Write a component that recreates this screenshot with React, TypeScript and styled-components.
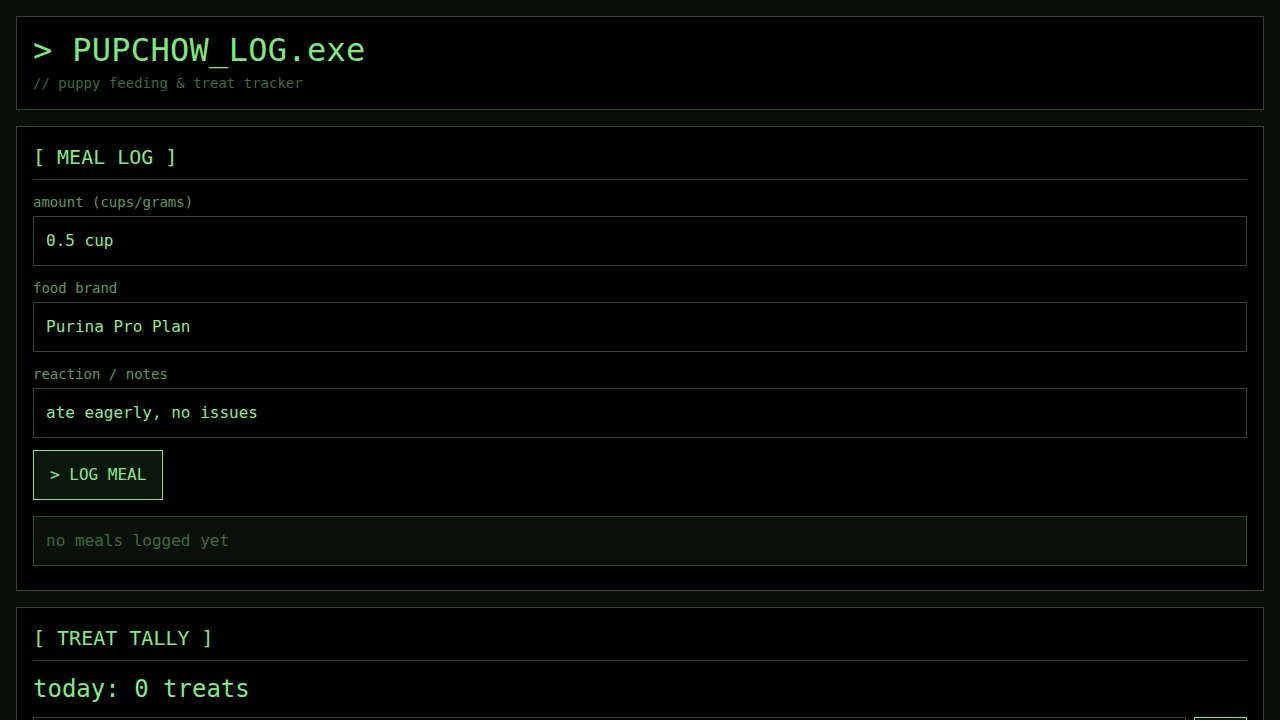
import React from "react";
import styled, { createGlobalStyle } from "styled-components";

const Global = createGlobalStyle`
  html, body { margin: 0; padding: 0; background: #0a0f0a; }
  body { font-family: "DejaVu Sans Mono", "Liberation Mono", monospace; color: #7fe07f; }
  * { box-sizing: border-box; }
`;

const Page = styled.div`
  padding: 16px;
  display: flex;
  flex-direction: column;
  gap: 16px;
`;

const Panel = styled.section`
  background: #000;
  border: 1px solid #2b4a2b;
  padding: 16px;
  display: flex;
  flex-direction: column;
`;

const Title = styled.h1`
  margin: 0 0 6px;
  font-size: 32px;
  line-height: 35px;
  letter-spacing: 0.3px;
  font-weight: normal;
  color: #7fe87f;
`;

const Subtitle = styled.div`
  font-size: 14px;
  line-height: 19px;
  color: #3b6b3b;
`;

const Heading = styled.h2`
  margin: 0 0 12px;
  font-size: 20px;
  line-height: 28px;
  font-weight: normal;
  padding-bottom: 8px;
  border-bottom: 1px solid #2b4a2b;
  color: #86e886;
`;

const Field = styled.div`
  display: flex;
  flex-direction: column;
  gap: 4px;
  margin-bottom: 12px;
`;

const Label = styled.label`
  font-size: 14px;
  line-height: 20px;
  color: #5c9a5c;
`;

const Input = styled.input`
  width: 100%;
  height: 50px;
  background: #000;
  border: 1px solid #2b4a2b;
  padding: 11px 12px 13px;
  font-family: inherit;
  font-size: 16px;
  line-height: 24px;
  color: #8ee88e;
  outline: none;
`;

const Button = styled.button`
  align-self: flex-start;
  height: 50px;
  padding: 12px 16px;
  background: #0b170b;
  border: 1px solid #86e086;
  font-family: inherit;
  font-size: 16px;
  line-height: 24px;
  color: #86e886;
  cursor: pointer;
`;

const Empty = styled.div`
  margin-top: 16px;
  margin-bottom: 8px;
  height: 50px;
  padding: 12px;
  background: #0a110a;
  border: 1px solid #2b4a2b;
  font-size: 16px;
  line-height: 24px;
  color: #3b6b3b;
`;

const Count = styled.div`
  font-size: 24px;
  line-height: 32px;
  margin-bottom: 12px;
  color: #86e886;
`;

const Row = styled.div`
  display: flex;
  gap: 8px;
`;

const SmallButton = styled(Button)`
  width: 53px;
  padding: 12px 0;
  flex: none;
`;

export default function App() {
  return (
    <>
      <Global />
      <Page>
        <Panel>
          <Title>&gt; PUPCHOW_LOG.exe</Title>
          <Subtitle>// puppy feeding &amp; treat tracker</Subtitle>
        </Panel>
        <Panel>
          <Heading>[ MEAL LOG ]</Heading>
          <Field>
            <Label>amount (cups/grams)</Label>
            <Input defaultValue="0.5 cup" />
          </Field>
          <Field>
            <Label>food brand</Label>
            <Input defaultValue="Purina Pro Plan" />
          </Field>
          <Field>
            <Label>reaction / notes</Label>
            <Input defaultValue="ate eagerly, no issues" />
          </Field>
          <Button>&gt; LOG MEAL</Button>
          <Empty>no meals logged yet</Empty>
        </Panel>
        <Panel>
          <Heading>[ TREAT TALLY ]</Heading>
          <Count>today: 0 treats</Count>
          <Row>
            <Input placeholder="treat name" />
            <SmallButton>+1</SmallButton>
          </Row>
        </Panel>
      </Page>
    </>
  );
}
